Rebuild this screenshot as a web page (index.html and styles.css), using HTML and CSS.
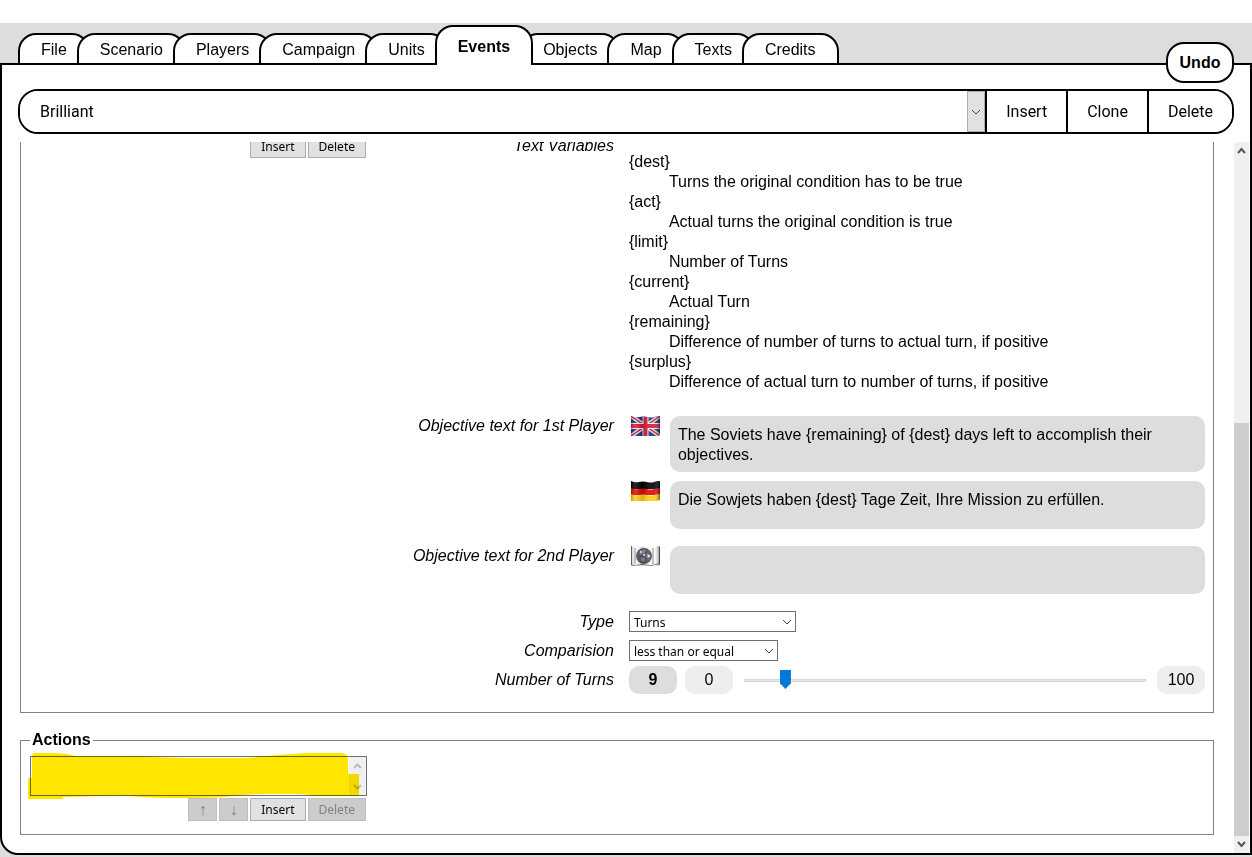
FILE: index.html
```html
<!DOCTYPE html>
<html lang="en">
<head>
  <meta charset="UTF-8" />
  <meta name="viewport" content="width=device-width, initial-scale=1" />
  <title>Scenario Editor - Events</title>
  <link rel="stylesheet" href="styles.css">
</head>
<body>

<div class="app">
  <nav class="tabs">
    <a href="#file">File</a>
    <a href="#scenario">Scenario</a>
    <a href="#players">Players</a>
    <a href="#campaign">Campaign</a>
    <a href="#units">Units</a>
    <a href="#events" class="active">Events</a>
    <a href="#objects">Objects</a>
    <a href="#map">Map</a>
    <a href="#texts">Texts</a>
    <a href="#credits">Credits</a>
  </nav>
  <button class="undo" type="button">Undo</button>

  <main class="panel">
    <div class="toolbar">
      <div class="picker">
        <select aria-label="Event">
          <option>Brilliant</option>
        </select>
        <span class="picker-arrow"><svg width="10" height="6" viewBox="0 0 10 6"><path d="M1 1l4 4 4-4" /></svg></span>
      </div>
      <button type="button">Insert</button>
      <button type="button">Clone</button>
      <button type="button">Delete</button>
    </div>

    <div class="view">
      <div class="content">

        <!-- Conditions -->
        <fieldset class="conditions">
          <div class="list">
            <div class="list-buttons">
              <button type="button">Insert</button>
              <button type="button">Delete</button>
            </div>
          </div>

          <div class="form">
            <div class="row">
              <span class="label label-top">Text Variables</span>
              <dl>
                <dt>{dest}</dt>
                <dd>Turns the original condition has to be true</dd>
                <dt>{act}</dt>
                <dd>Actual turns the original condition is true</dd>
                <dt>{limit}</dt>
                <dd>Number of Turns</dd>
                <dt>{current}</dt>
                <dd>Actual Turn</dd>
                <dt>{remaining}</dt>
                <dd>Difference of number of turns to actual turn, if positive</dd>
                <dt>{surplus}</dt>
                <dd>Difference of actual turn to number of turns, if positive</dd>
              </dl>
            </div>

            <div class="row row-text">
              <label class="label label-top" for="text1-en">Objective text for 1st Player</label>
              <div class="texts">
                <div class="text">
                  <svg class="flag" viewBox="0 0 29 21">
                    <g clip-path="url(#wave)">
                      <path fill="#1f2f78" d="M0 0h29v21H0z" />
                      <path stroke="#e4e4ee" stroke-width="4" d="M0 0l29 20M29 0L0 20" />
                      <path stroke="#c8203a" stroke-width="1.5" d="M0 0l29 20M29 0L0 20" />
                      <path stroke="#eee" stroke-width="6" d="M14.500 0v21M0 10h29" />
                      <path stroke="#d01c38" stroke-width="4" d="M14.500 0v21M0 10h29" />
                      <path fill="url(#shade)" d="M0 0h29v21H0z" />
                    </g>
                  </svg>
                  <textarea id="text1-en" class="tall">The Soviets have {remaining} of {dest} days left to accomplish their objectives.</textarea>
                </div>
                <div class="text">
                  <svg class="flag" viewBox="0 0 29 21">
                    <g clip-path="url(#wave)">
                      <path fill="#000" d="M0 0h29v8H0z" />
                      <path fill="#e00808" d="M0 7q4 2 8 1t8 0 7 0 6-1v7H0z" />
                      <path fill="#ffcf10" d="M0 13q4 2 8 1t8 0 7 0 6-1v8H0z" />
                      <path fill="url(#shade)" d="M0 0h29v21H0z" />
                    </g>
                  </svg>
                  <textarea id="text1-de" aria-label="Objective text for 1st Player, German">Die Sowjets haben {dest} Tage Zeit, Ihre Mission zu erfüllen.</textarea>
                </div>
              </div>
            </div>

            <div class="row row-text">
              <label class="label label-top" for="text2">Objective text for 2nd Player</label>
              <div class="texts">
                <div class="text">
                  <svg class="flag" viewBox="0 0 29 21">
                    <g clip-path="url(#wave)">
                      <path fill="#fff" d="M0 0h29v21H0z" />
                      <path fill="none" stroke="#777" d="M.5 0v19q4 1 7 0t8 0 7 0 6-1V1M4 2v16M22 2v16" />
                      <circle cx="13" cy="10" r="8" fill="#50505f" />
                      <path fill="#8c8c9a" d="M8 6q3-4 7-2l-2 4-4 1zM10 11l4 1-1 4-3-1zM16 7l3 2-1 4-3-2z" />
                      <path fill="#e2e2e6" d="M12 8h2v2h-2zM17 9h2v2h-2zM9 5h2v2H9z" />
                      <path fill="url(#shade)" d="M0 0h29v21H0z" />
                    </g>
                  </svg>
                  <textarea id="text2"></textarea>
                </div>
              </div>
            </div>

            <div class="controls">
              <div class="row row-control">
                <label class="label" for="type">Type</label>
                <div class="dropdown dropdown-type">
                  <select id="type">
                    <option>Turns</option>
                  </select>
                  <svg width="10" height="6" viewBox="0 0 10 6"><path d="M1 1l4 4 4-4" /></svg>
                </div>
              </div>
              <div class="row row-control">
                <label class="label" for="comparision">Comparision</label>
                <div class="dropdown dropdown-comparision">
                  <select id="comparision">
                    <option>less than or equal</option>
                  </select>
                  <svg width="10" height="6" viewBox="0 0 10 6"><path d="M1 1l4 4 4-4" /></svg>
                </div>
              </div>
              <div class="row row-control">
                <label class="label" for="turns">Number of Turns</label>
                <div class="slider">
                  <output class="pill pill-value" for="turns">9</output>
                  <span class="pill">0</span>
                  <input type="range" id="turns" min="0" max="100" value="9" />
                  <span class="pill">100</span>
                </div>
              </div>
            </div>
          </div>
        </fieldset>

        <!-- Actions -->
        <fieldset class="actions">
          <legend>Actions</legend>
          <div class="list">
            <div class="listbox">
              <select size="2" aria-label="Actions"></select>
              <svg class="listbox-scroll" width="17" height="38" viewBox="0 0 17 38">
                <path fill="#f0f0f0" d="M0 0h17v38H0z" />
                <path fill="none" stroke="#bbb" stroke-width="2" d="M5 11l3.500-3.500L12 11M5 28l3.500 3.500L12 28" />
              </svg>
              <svg class="marker" width="332" height="48" viewBox="0 0 332 48">
                <path fill="#ffe600" d="M5 1h20q12 0 24 3h60q30 2 70 2h35q20-1 35-3l30-2h34q7 0 7 7v14h11v22h-42q-10-2-24-2h-20q-30 0-48 3-50 2-84 0-20-2-34-1l-44 1v2H0V26h4V5z" />
              </svg>
            </div>
            <div class="list-buttons">
              <button type="button" class="move" aria-label="Move up" disabled>↑</button>
              <button type="button" class="move" aria-label="Move down" disabled>↓</button>
              <button type="button">Insert</button>
              <button type="button" disabled>Delete</button>
            </div>
          </div>
        </fieldset>

      </div>

      <div class="scrollbar">
        <span class="scroll-arrow"><svg width="9" height="7" viewBox="0 0 9 7"><path d="M1 6l3.500-4L8 6" /></svg></span>
        <div class="scroll-track"><div class="scroll-thumb"></div></div>
        <span class="scroll-arrow"><svg width="9" height="7" viewBox="0 0 9 7"><path d="M1 1l3.500 4L8 1" /></svg></span>
      </div>
    </div>
  </main>
</div>

<!-- Shared by all flags -->
<svg class="defs" width="0" height="0">
  <defs>
    <clipPath id="wave">
      <path d="M0 0q4 2 8 1t8 0 7 0 6-1v19q-3 1-6 1t-7 0-8 0-8 0z" />
    </clipPath>
    <linearGradient id="shade">
      <stop offset="0" stop-color="#000" stop-opacity=".25" />
      <stop offset=".15" stop-color="#fff" stop-opacity=".15" />
      <stop offset=".4" stop-color="#000" stop-opacity=".15" />
      <stop offset=".6" stop-color="#fff" stop-opacity=".1" />
      <stop offset=".8" stop-color="#fff" stop-opacity=".1" />
      <stop offset="1" stop-color="#000" stop-opacity=".5" />
    </linearGradient>
  </defs>
</svg>

</body>
</html>
```
FILE: styles.css
```css
:root {
  --ui-font: "Noto Sans", Tahoma, sans-serif;
  --toolbar-font: Roboto, Tahoma, sans-serif;
  --grey: #ddd;
  --line: #808080;
}

* {
  box-sizing: border-box;
}

body {
  margin: 0;
  padding-top: 23px;
  height: 100vh;
  display: flex;
  flex-direction: column;
  background: #fff;
  color: #000;
  font-family: Arial, "Liberation Sans", sans-serif;
  font-size: 16px;
  line-height: 20px;
}

button, select, textarea {
  margin: 0;
  color: inherit;
}

.defs {
  position: absolute;
}

.app {
  position: relative;
  flex: 1;
  min-height: 0;
  display: flex;
  flex-direction: column;
  padding: 2px 0;
  background: var(--grey);
}

/* Tabs */
.tabs {
  position: relative;
  z-index: 1;
  display: flex;
  align-items: flex-end;
  margin-bottom: -2px;
  padding: 0 18px;
}

.tabs a {
  display: flex;
  align-items: center;
  height: 32px;
  padding: 2px 21px 0;
  border: 2px solid #000;
  border-radius: 18px 18px 0 0;
  background: #fff;
  color: #000;
  text-decoration: none;
}

.tabs a + a {
  margin-left: -13px;
}

.tabs .active {
  position: relative;
  height: 40px;
  border-bottom: none;
  font-weight: bold;
}

.undo {
  position: absolute;
  z-index: 2;
  top: 19px;
  right: 18px;
  width: 68px;
  height: 41px;
  padding: 0;
  border: 2px solid #000;
  border-radius: 18px;
  background: #fff;
  font: bold 16px Arial, "Liberation Sans", sans-serif;
}

.panel {
  flex: 1;
  min-height: 0;
  display: flex;
  flex-direction: column;
  border: 2px solid #000;
  border-radius: 0 0 0 18px;
  background: #fff;
  overflow: hidden;
}

/* Toolbar */
.toolbar {
  display: flex;
  flex: none;
  height: 45px;
  margin: 24px 16px 8px;
  border: 2px solid #000;
  border-radius: 20px;
  overflow: hidden;
}

.toolbar button {
  padding: 0 19px;
  border: none;
  border-left: 2px solid #000;
  background: #fff;
  font: 16px var(--toolbar-font);
}

.picker {
  position: relative;
  flex: 1;
}

.picker select {
  width: 100%;
  height: 100%;
  padding: 0 20px;
  border: none;
  appearance: none;
  background: #fff;
  font: 16px var(--toolbar-font);
}

.picker-arrow {
  position: absolute;
  top: 0;
  right: 0;
  bottom: 0;
  width: 18px;
  display: flex;
  align-items: center;
  justify-content: center;
  border: 1px solid #adadad;
  background: #e1e1e1;
  pointer-events: none;
}

.picker-arrow path, .dropdown path {
  fill: none;
  stroke: #444;
}

/* Scrolled to the end, so the content is cut off at the top */
.view {
  flex: 1;
  min-height: 0;
  display: flex;
  overflow: hidden;
}

.content {
  flex: 1;
  min-width: 0;
  display: flex;
  flex-direction: column;
  justify-content: flex-end;
  padding: 0 20px 18px 18px;
}

fieldset {
  flex: none;
  min-width: 0;
  margin: 0;
  border: 1px solid var(--line);
}

.conditions {
  display: flex;
  padding: 18px 8px 18px 9px;
}

.actions {
  margin-top: 17px;
  padding: 6px 9px 13px;
}

.actions legend {
  padding: 0 2px;
  font-weight: bold;
}

.list {
  width: 337px;
  flex: none;
}

.list-buttons {
  display: flex;
  justify-content: flex-end;
  gap: 2px;
  padding-right: 1px;
}

.list-buttons button {
  height: 23px;
  padding: 0 10px;
  border: 1px solid #adadad;
  background: #e1e1e1;
  font: 12px var(--ui-font);
}

.list-buttons button:disabled {
  border-color: #bfbfbf;
  background: #ccc;
  color: #838383;
}

.list-buttons .move {
  width: 29px;
  padding: 0;
  font: 16px "Liberation Sans", sans-serif;
}

.listbox {
  position: relative;
  height: 40px;
  margin-bottom: 2px;
}

.listbox select {
  display: block;
  width: 100%;
  height: 40px;
  border: 1px solid #707070;
  border-radius: 0;
  background: #fff;
}

.listbox-scroll {
  position: absolute;
  top: 1px;
  right: 1px;
}

.marker {
  position: absolute;
  top: -4px;
  left: -2px;
  mix-blend-mode: multiply;
  pointer-events: none;
}

/* Form */
.form {
  flex: 1;
  min-width: 0;
}

.row {
  display: grid;
  grid-template-columns: 3fr 7fr;
  column-gap: 15px;
}

.label {
  font-style: italic;
  text-align: right;
}

.label-top {
  padding-top: 1px;
}

dl {
  margin: 17px 0 7px;
}

dd {
  margin-left: 40px;
}

.row-text {
  margin-top: 16px;
}

.texts {
  display: flex;
  flex-direction: column;
  gap: 9px;
  padding-top: 1px;
}

.text {
  display: flex;
  gap: 10px;
  padding-left: 2px;
}

.flag {
  flex: none;
  width: 29px;
  height: 21px;
}

textarea {
  flex: 1;
  display: block;
  height: 48px;
  padding: 9px 8px 7px;
  border: none;
  border-radius: 10px;
  background: var(--grey);
  font: 16px/20px Arial, "Liberation Sans", sans-serif;
  resize: none;
  overflow: hidden;
}

textarea.tall {
  height: 56px;
}

.controls {
  margin-top: 13px;
}

.row-control {
  height: 29px;
  align-items: center;
}

.dropdown {
  position: relative;
}

.dropdown-type {
  width: 167px;
}

.dropdown-comparision {
  width: 149px;
}

.dropdown select {
  display: block;
  width: 100%;
  height: 21px;
  padding: 1px 4px 0;
  border: 1px solid #707070;
  border-radius: 0;
  appearance: none;
  background: #fff;
  font: 12px var(--ui-font);
}

.dropdown svg {
  position: absolute;
  top: 8px;
  right: 4px;
  pointer-events: none;
}

.slider {
  display: flex;
  align-items: center;
  gap: 8px;
}

.pill {
  flex: none;
  width: 48px;
  height: 28px;
  border-radius: 10px;
  background: #eee;
  line-height: 28px;
  text-align: center;
}

.pill-value {
  background: var(--grey);
  font-weight: bold;
}

input[type="range"] {
  flex: 1;
  min-width: 0;
  height: 19px;
  margin: 2px 3px 0;
  appearance: none;
  background: none;
}

input[type="range"]::-webkit-slider-runnable-track {
  height: 3px;
  border: 1px solid #d6d6d6;
  background: #e7eaea;
}

input[type="range"]::-webkit-slider-thumb {
  appearance: none;
  width: 11px;
  height: 19px;
  margin-top: -10px;
  background: #0078d7;
  clip-path: polygon(0 0, 100% 0, 100% 70%, 50% 100%, 0 70%);
}

/* Scrollbar */
.scrollbar {
  flex: none;
  width: 15px;
  margin-right: 1px;
  display: flex;
  flex-direction: column;
  background: #f0f0f0;
}

.scroll-arrow {
  flex: none;
  height: 17px;
  display: flex;
  align-items: center;
  justify-content: center;
}

.scroll-arrow path {
  fill: none;
  stroke: #555;
  stroke-width: 2;
}

.scroll-track {
  flex: 1;
  display: flex;
  align-items: flex-end;
}

.scroll-thumb {
  width: 100%;
  height: 61%;
  background: #cdcdcd;
}
```
